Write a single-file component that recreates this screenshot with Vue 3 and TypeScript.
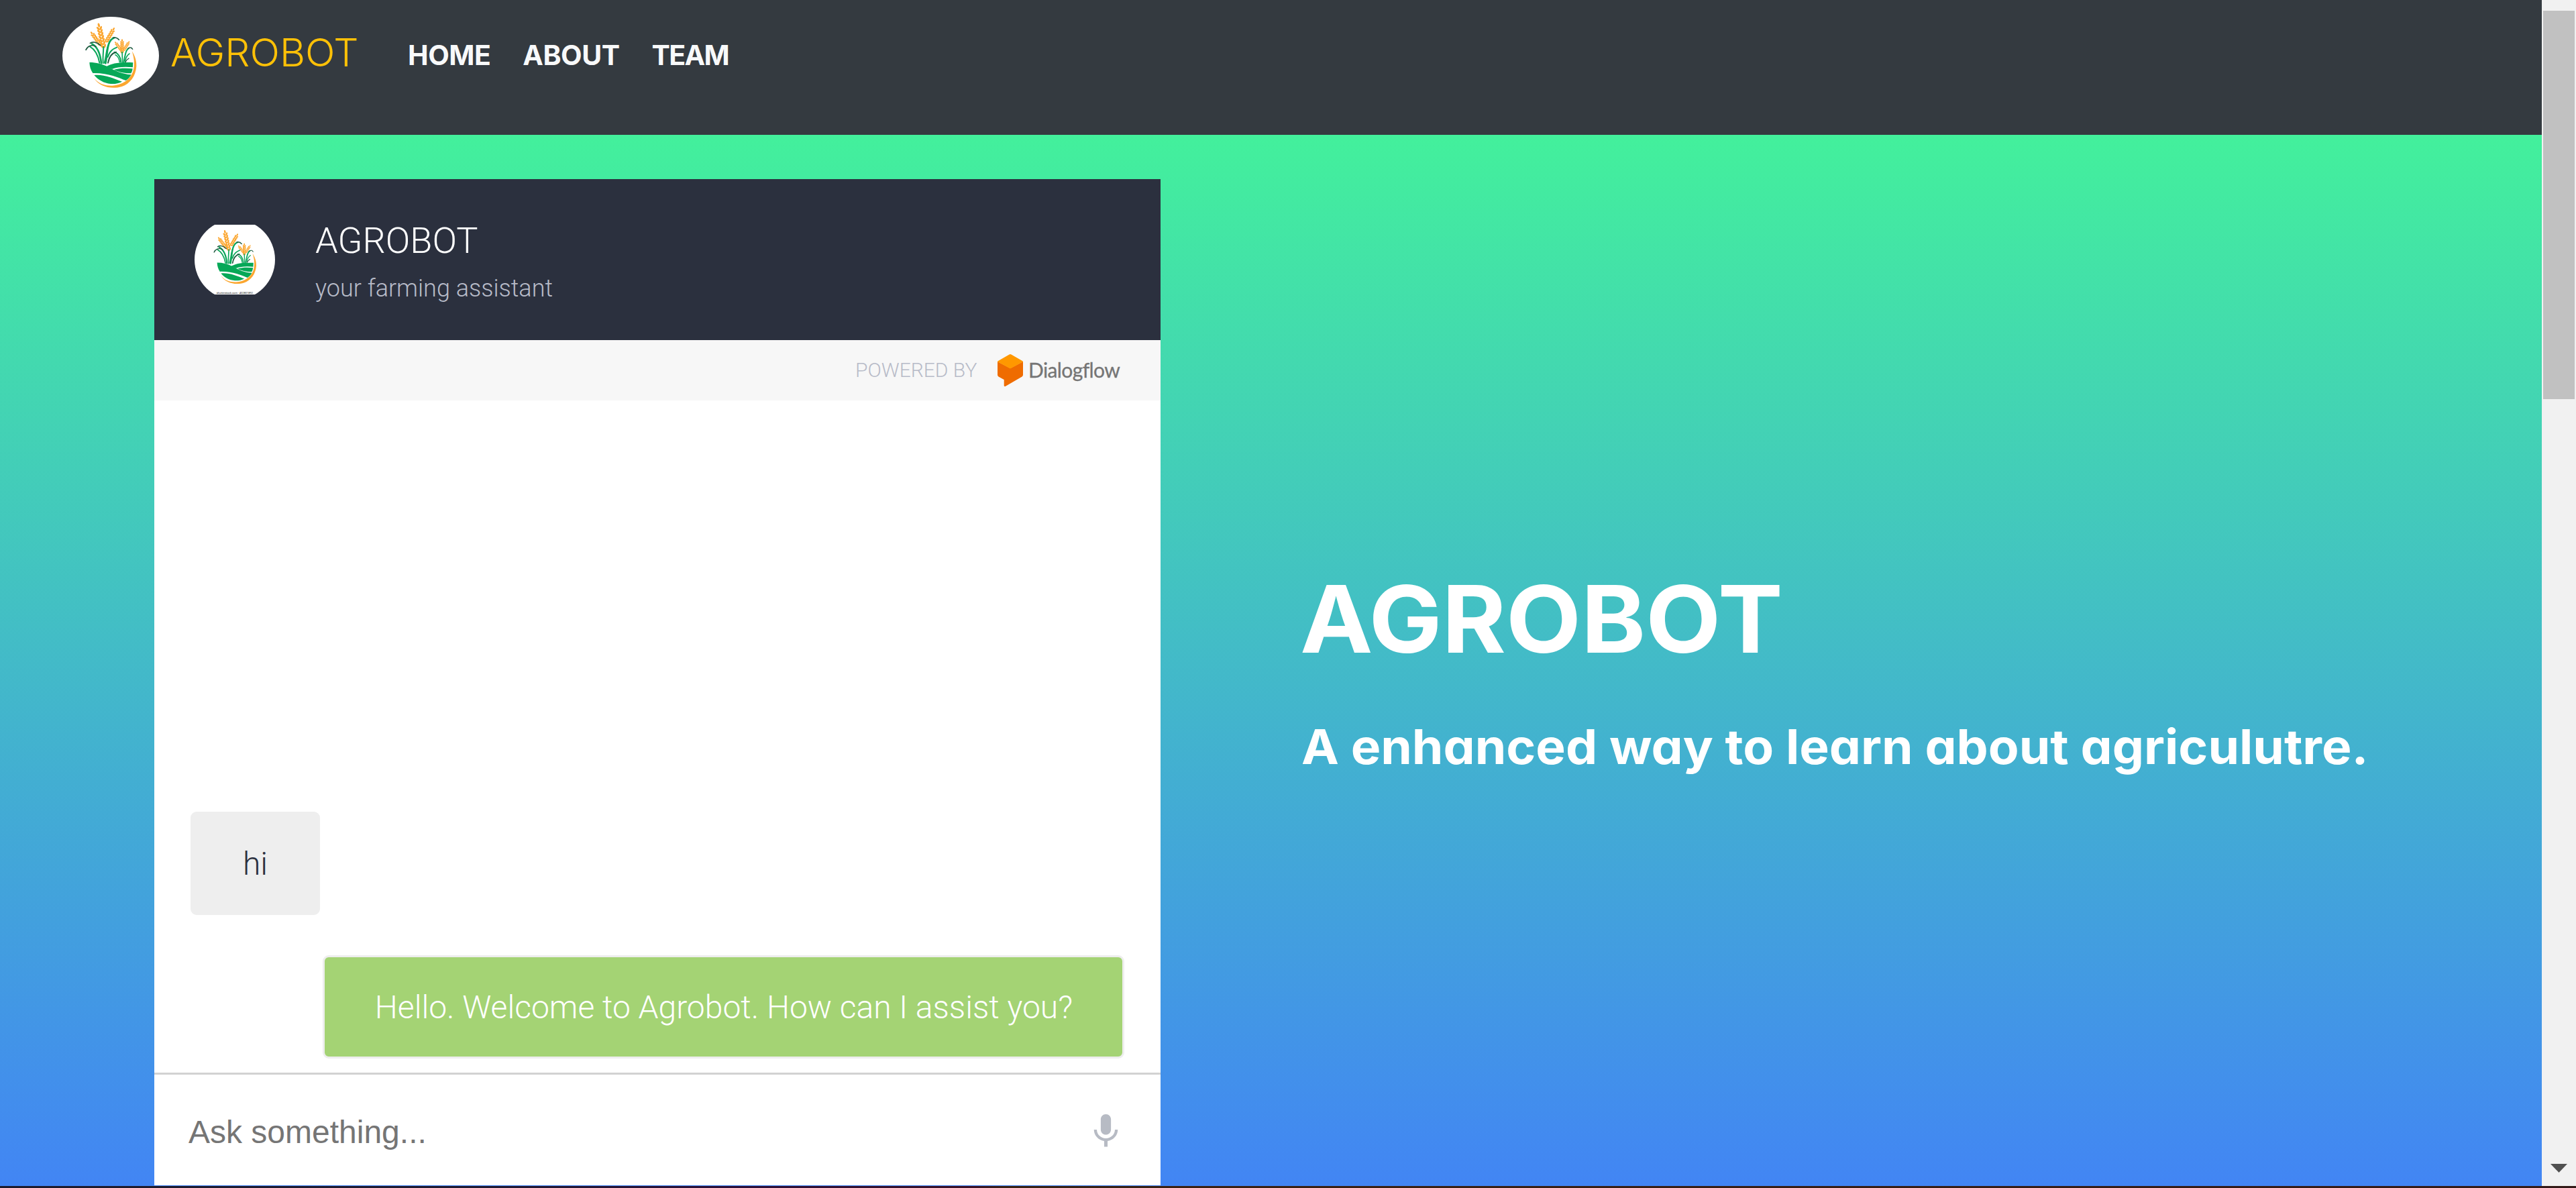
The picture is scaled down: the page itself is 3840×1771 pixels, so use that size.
<script setup lang="ts">
interface Stalk {
  x1: number
  y1: number
  x2: number
  y2: number
  pairs: number
  size: number
}

interface Grain {
  x: number
  y: number
  rx: number
  ry: number
  angle: number
}

const navLinks = ['HOME', 'ABOUT', 'TEAM']

const messages = [
  { from: 'user', text: 'hi' },
  { from: 'bot', text: 'Hello. Welcome to Agrobot. How can I assist you?' },
]

const stalks: Stalk[] = [
  { x1: 184, y1: 132, x2: 163, y2: 38, pairs: 7, size: 9.5 },
  { x1: 168, y1: 122, x2: 131, y2: 73, pairs: 6, size: 7.5 },
  { x1: 198, y1: 108, x2: 229, y2: 55, pairs: 6, size: 7.5 },
  { x1: 267, y1: 158, x2: 267, y2: 106, pairs: 6, size: 6.5 },
  { x1: 261, y1: 147, x2: 238, y2: 116, pairs: 5, size: 5.5 },
  { x1: 276, y1: 147, x2: 297, y2: 114, pairs: 5, size: 5.5 },
]

// Each stalk carries mirrored pairs of grains and one at its tip.
const grains: Grain[] = stalks.flatMap((s) => {
  const dx = s.x2 - s.x1
  const dy = s.y2 - s.y1
  const len = Math.hypot(dx, dy)
  const nx = -dy / len
  const ny = dx / len
  const heading = (Math.atan2(dy, dx) * 180) / Math.PI
  const row: Grain[] = [{ x: s.x2, y: s.y2, rx: s.size, ry: s.size * 0.5, angle: heading }]
  for (let i = 0; i < s.pairs; i++) {
    const t = i / s.pairs
    for (const side of [-1, 1]) {
      row.push({
        x: s.x1 + dx * t + nx * side * s.size * 0.62,
        y: s.y1 + dy * t + ny * side * s.size * 0.62,
        rx: s.size,
        ry: s.size * 0.48,
        angle: heading + side * 32,
      })
    }
  }
  return row
})
</script>

<template>
  <div class="window">
    <svg width="0" height="0" class="defs" aria-hidden="true">
      <g id="farm-logo">
        <ellipse
          v-for="(g, i) in grains"
          :key="i"
          :cx="g.x"
          :cy="g.y"
          :rx="g.rx"
          :ry="g.ry"
          :transform="`rotate(${g.angle} ${g.x} ${g.y})`"
          fill="#fba62f"
        />
        <g fill="none" stroke="#0ba65a" stroke-linecap="round">
          <path d="M174 208C170 170 160 135 132 121" stroke-width="8" />
          <path d="M166 206C160 172 148 148 124 134" stroke-width="6" />
          <path d="M182 208C180 180 184 150 184 134" stroke-width="6" />
          <path d="M188 206C196 178 196 150 205 128" stroke-width="6" />
          <path d="M193 208C204 160 196 108 232 94" stroke-width="8" />
          <path d="M203 180C212 152 226 144 243 137" stroke-width="6" />
          <path d="M262 203C260 182 252 164 232 158" stroke-width="6" />
          <path d="M269 203C268 185 268 172 267 158" stroke-width="5" />
          <path d="M274 203C282 172 282 148 298 140" stroke-width="6" />
          <path d="M280 201C284 178 292 170 300 165" stroke-width="4.5" />
          <path d="M256 203C254 190 248 175 236 170" stroke-width="4.5" />
        </g>
        <g fill="none" stroke="#1f5a40" stroke-linecap="round">
          <path d="M170 128C152 110 132 112 124 118" stroke-width="5" />
          <path d="M150 133C130 122 112 132 105 148" stroke-width="5" />
          <path d="M226 94C238 91 246 94 253 103" stroke-width="5" />
          <path d="M204 206C208 184 216 164 240 158" stroke-width="6" />
          <path d="M292 143C302 134 310 138 314 145" stroke-width="4" />
          <path d="M282 203C285 195 290 190 297 186" stroke-width="4" />
        </g>
        <g fill="#06a857">
          <path d="M121 204C152 204 178 211 206 225C238 243 270 257 308 259C302 270 294 279 284 285C250 272 204 250 136 252C126 238 122 222 121 204Z" />
          <path d="M142 261C188 257 226 275 267 290C252 298 236 301 216 300C186 297 160 283 142 261Z" />
          <path d="M196 223C224 208 252 202 316 205L315 226C282 222 246 224 222 234Z" />
          <path d="M230 237C256 229 286 229 314 232C313 240 311 247 307 253C276 253 252 247 230 237Z" />
        </g>
        <path d="M141 274C166 304 196 309 224 308C266 306 300 284 315 247C325 220 322 186 311 154C327 178 332 202 331 222C328 266 302 300 266 312C220 326 166 314 141 274Z" fill="#fba62f" />
      </g>
    </svg>

    <div class="viewport">
      <div class="page">
        <header class="navbar">
          <svg class="nav-logo" viewBox="0 0 432 348"><use href="#farm-logo" /></svg>
          <span class="brand">AGROBOT</span>
          <nav class="links">
            <a v-for="link in navLinks" :key="link" :class="link.toLowerCase()">{{ link }}</a>
          </nav>
        </header>

        <main class="hero">
          <section class="chat">
            <div class="chat-head">
              <div class="avatar">
                <svg viewBox="0 0 432 375" preserveAspectRatio="none">
                  <rect width="432" height="375" fill="#fff" />
                  <use href="#farm-logo" />
                  <text x="216" y="370" text-anchor="middle" textLength="196" font-size="15" fill="#222">shutterstock.com · 402801892</text>
                </svg>
              </div>
              <div class="titles">
                <div class="title">AGROBOT</div>
                <div class="subtitle">your farming assistant</div>
              </div>
            </div>

            <div class="powered">
              <span class="powered-by">POWERED BY</span>
              <svg class="flow-icon" viewBox="0 0 38 48">
                <path d="M0 11L19 21L38 11V31Q38 32.500 36.500 33.400L12 47.700Q9.700 48.800 9.700 46.500V38L1.500 33.400Q0 32.500 0 31Z" fill="#ef6c00" />
                <path d="M0 11.200Q0 10.400 1 9.900L17.500.5Q19-.3 20.500.5L37 9.900Q38 10.400 38 11.200L19 21.400Z" fill="#ff9800" />
              </svg>
              <span class="flow-name">Dialogflow</span>
            </div>

            <div class="messages">
              <div v-for="m in messages" :key="m.text" class="bubble" :class="m.from">{{ m.text }}</div>
            </div>

            <div class="ask">
              <span class="placeholder">Ask something...</span>
              <svg class="mic" viewBox="0 0 24 24">
                <path d="M12 14c1.660 0 2.990-1.340 2.990-3L15 5c0-1.660-1.340-3-3-3S9 3.340 9 5v6c0 1.660 1.340 3 3 3zm5.300-3c0 3-2.540 5.100-5.300 5.100S6.700 14 6.700 11H5c0 3.410 2.720 6.230 6 6.720V21h2v-3.280c3.280-.48 6-3.300 6-6.720h-1.700z" fill="#b7bbc4" />
              </svg>
            </div>
          </section>

          <section class="pitch">
            <h1>AGROBOT</h1>
            <h2>A enhanced way to learn about agriculutre.</h2>
          </section>
        </main>
      </div>

      <div class="scrollbar">
        <div class="thumb"></div>
        <svg class="arrow" viewBox="0 0 25 13"><path d="M0 0H25L12.500 13Z" fill="#505050" /></svg>
      </div>
    </div>
    <div class="desktop-edge"></div>
  </div>
</template>

<style>
html,
body {
  margin: 0;
  overflow: hidden;
}
</style>

<style scoped>
.window {
  width: 3840px;
  height: 1771px;
  display: flex;
  flex-direction: column;
  overflow: hidden;
  font-family: Roboto, 'Liberation Sans', sans-serif;
}
.defs {
  position: absolute;
}
.viewport {
  display: flex;
  height: 1768px;
}
.page {
  display: flex;
  flex-direction: column;
  width: 3789px;
}

.navbar {
  box-sizing: border-box;
  display: flex;
  align-items: flex-start;
  height: 201px;
  padding-left: 93px;
  background: #343a40;
  font-family: Inter, 'Liberation Sans', sans-serif;
}
.nav-logo {
  width: 144px;
  height: 116px;
  margin-top: 25px;
  border-radius: 50%;
  background: #fff;
}
.brand {
  width: 354px;
  margin-left: 17px;
  color: #ffc107;
  font-size: 58px;
  font-weight: 360;
  line-height: 156px;
  transform: scaleX(1.01);
  transform-origin: 0 0;
}
.links {
  display: flex;
  gap: 48px;
  color: #f8f9fa;
  font-size: 41px;
  font-weight: 650;
  line-height: 164px;
  letter-spacing: -0.5px;
}
.links .team {
  letter-spacing: -1.6px;
}

.hero {
  display: flex;
  align-items: flex-start;
  height: 1567px;
  background: linear-gradient(#43f09c, #4285f4);
}
.chat {
  display: flex;
  flex-direction: column;
  width: 1500px;
  height: 1500px;
  margin: 66px 0 0 230px;
  background: #fff;
}
.chat-head {
  display: flex;
  flex: none;
  height: 240px;
  background: #2b303e;
}
.avatar {
  display: flex;
  align-items: center;
  width: 120px;
  height: 120px;
  margin: 60px 60px 0;
  border-radius: 50%;
  overflow: hidden;
}
.avatar svg {
  width: 120px;
  height: 104px;
}
.titles {
  padding-top: 62px;
  font-weight: 300;
}
.title {
  color: #fff;
  font-size: 54px;
  line-height: 60px;
}
.subtitle {
  margin-top: 16px;
  color: #b7bbc8;
  font-size: 36px;
  line-height: 50px;
}
.powered {
  box-sizing: border-box;
  display: flex;
  flex: none;
  align-items: center;
  height: 90px;
  padding-left: 1045px;
  background: #f7f7f7;
}
.powered-by {
  width: 212px;
  color: #b7bbc8;
  font-size: 30px;
  font-weight: 300;
  line-height: 88px;
}
.flow-icon {
  width: 38px;
  height: 48px;
}
.flow-name {
  margin: -3px 0 0 8px;
  color: #757575;
  font-family: Lato, 'Liberation Sans', sans-serif;
  font-size: 30px;
  line-height: 82px;
  letter-spacing: -0.6px;
  -webkit-text-stroke: 0.3px #757575;
}
.messages {
  box-sizing: border-box;
  display: flex;
  flex-direction: column;
  flex: none;
  justify-content: flex-end;
  gap: 60px;
  height: 1002px;
  padding: 0 54px 21px 54px;
}
.bubble {
  height: 148px;
  padding: 0 75px;
  border: 3px solid #eee;
  border-radius: 9px;
  font-size: 48px;
  font-weight: 300;
  line-height: 150px;
  white-space: nowrap;
}
.bubble.user {
  align-self: flex-start;
  background: #eee;
  color: #2b303e;
}
.bubble.bot {
  align-self: flex-end;
  padding: 0 74px 0 75px;
  background: #a4d374;
  color: #fff;
}
.ask {
  display: flex;
  flex: none;
  align-items: center;
  justify-content: space-between;
  height: 165px;
  padding: 0 51px;
  border-top: 3px solid #d2d2d2;
}
.placeholder {
  padding-top: 6px;
  color: #757575;
  font-family: 'Liberation Sans', sans-serif;
  font-size: 48px;
  line-height: 56px;
}
.mic {
  width: 61px;
  height: 61px;
  margin-top: 4px;
}

.pitch {
  padding: 642px 0 0 208px;
  color: #fff;
  font-family: Inter, 'Liberation Sans', sans-serif;
  font-feature-settings: 'cv11' 1;
  white-space: nowrap;
}
.pitch h1 {
  margin: 0;
  font-size: 139px;
  font-weight: 750;
  line-height: 160px;
  transform: scaleX(1.046);
  transform-origin: 0 0;
}
.pitch h2 {
  margin: 60px 0 0 2px;
  font-size: 72px;
  font-weight: 650;
  line-height: 100px;
  transform: scaleX(1.04);
  transform-origin: 0 0;
}

.scrollbar {
  box-sizing: border-box;
  display: flex;
  flex-direction: column;
  align-items: center;
  justify-content: space-between;
  width: 51px;
  padding: 16px 0 20px;
  background: #f1f1f1;
}
.thumb {
  width: 47px;
  height: 579px;
  background: #c1c1c1;
}
.arrow {
  width: 25px;
  height: 13px;
}
.desktop-edge {
  height: 3px;
  background: linear-gradient(90deg, #1d1c2e 0, #211b30 700px, #2e1038 1100px, #3c1226 1450px, #3a2214 1500px, #331a18 3840px);
}
</style>
